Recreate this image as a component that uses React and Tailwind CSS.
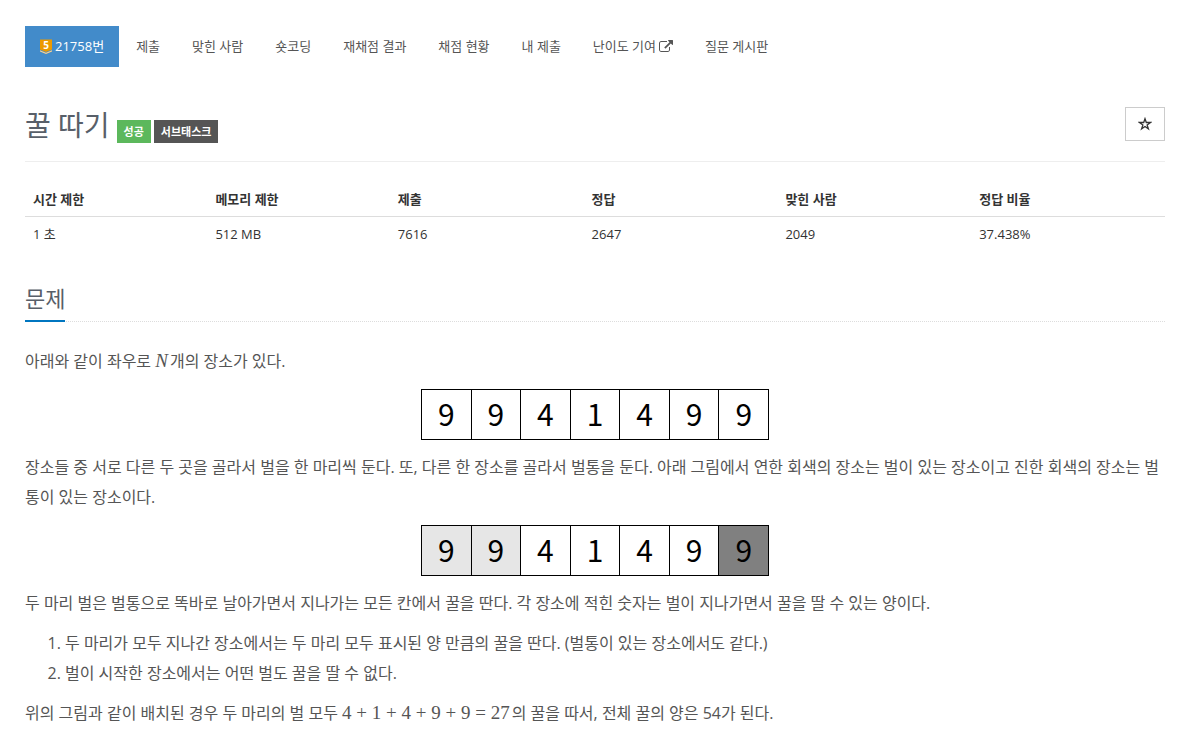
import React from 'react';

const tabs = ['제출', '맞힌 사람', '숏코딩', '재채점 결과', '채점 현황', '내 제출', '난이도 기여', '질문 게시판'];

const limits = [
  ['시간 제한', '1 초', 'w-[16%]'],
  ['메모리 제한', '512 MB', 'w-[16%]'],
  ['제출', '7616', 'w-[17%]'],
  ['정답', '2647', 'w-[17%]'],
  ['맞힌 사람', '2049', 'w-[17%]'],
  ['정답 비율', '37.438%', 'w-[17%]'],
];

const values = [9, 9, 4, 1, 4, 9, 9];

function TierBadge() {
  return (
    <svg className="h-4 w-3" viewBox="0 0 12 16" aria-hidden="true">
      <path d="M0 1.500h12v10L6 14 0 11.500z" fill="#ec9a00" />
      <path d="M0 12.200 6 14.700l6-2.500v1.300L6 16l-6-2.500z" fill="#ffd28d" />
      <text x="6" y="11" textAnchor="middle" className='font-["Open_Sans",sans-serif] text-[10px] font-bold' fill="#fff">5</text>
    </svg>
  );
}

function ExternalIcon() {
  return (
    <svg className="h-3 w-[14px]" viewBox="0 0 1792 1536" fill="currentColor" aria-hidden="true">
      <path d="M1408 800v320q0 119-84.500 203.500T1120 1408H288q-119 0-203.500-84.500T0 1120V288Q0 169 84.500 84.500T288 0h704q14 0 23 9t9 23v64q0 14-9 23t-23 9H288q-66 0-113 47t-47 113v832q0 66 47 113t113 47h832q66 0 113-47t47-113V800q0-14 9-23t23-9h64q14 0 23 9t9 23z" transform="translate(0 128)" />
      <path d="M1792 64v512q0 26-19 45t-45 19-45-19l-176-176-652 652q-10 10-23 10t-23-10L695 983q-10-10-10-23t10-23l652-652-176-176q-19-19-19-45t19-45 45-19h512q26 0 45 19t19 45z" />
    </svg>
  );
}

function StarIcon() {
  return (
    <svg className="h-[14px] w-[14px]" viewBox="0 0 14 14" fill="none" stroke="currentColor" strokeWidth="1.300" aria-hidden="true">
      <path d="M7 1.700 8.300 5.500h4.200L9.100 7.900l1.300 4L7 9.500l-3.400 2.400 1.300-4L1.500 5.500h4.200z" />
    </svg>
  );
}

function Row({ light = [], dark = [] }) {
  return (
    <div className="mx-auto mb-3 flex w-[348px] border-y border-l border-black text-black">
      {values.map((value, i) => (
        <div
          key={i}
          className={
            'flex h-[49px] flex-1 items-center justify-center border-r border-black pb-[3px] font-["Noto_Sans_CJK_KR",sans-serif] text-[30px] ' +
            (light.includes(i) ? 'bg-[#e6e6e6]' : dark.includes(i) ? 'bg-[#808080]' : 'bg-white')
          }
        >
          {value}
        </div>
      ))}
    </div>
  );
}

export default function App() {
  return (
    <div className='bg-white pt-[26px] pr-9 pl-[25px] font-["Open_Sans","Noto_Sans_CJK_KR",sans-serif] text-[13px] leading-5 text-[#333]'>
      <nav className="flex items-center gap-0.5 text-[#555]">
        <a href="#problem" className="flex h-[41px] items-center gap-[3px] bg-[#428bca] px-[15px] pb-0.5 text-white">
          <TierBadge />21758번
        </a>
        {tabs.map((tab) => (
          <a key={tab} href="#tab" className="flex h-[41px] items-center gap-[3px] px-[15px] pb-0.5">
            {tab}
            {tab === '난이도 기여' && <ExternalIcon />}
          </a>
        ))}
      </nav>

      <header className="mt-9 flex items-start justify-between border-b border-[#eee] pb-[18px]">
        <div className="flex items-center gap-[3px] pt-1">
          <h1 className="mr-1 text-[28px] leading-9 text-[#585f69]">꿀 따기</h1>
          <span className="mt-3 bg-[#5cb85c] px-[7px] text-[11px] leading-[23px] font-bold text-white">성공</span>
          <span className="mt-3 bg-[#555] px-[7px] text-[11px] leading-[23px] font-bold text-white">서브태스크</span>
        </div>
        <button aria-label="즐겨찾기" className="mt-1 flex h-[34px] w-10 items-center justify-center border border-[#ccc]">
          <StarIcon />
        </button>
      </header>

      <table className="mt-5 w-full table-fixed text-left">
        <thead>
          <tr className="border-b border-[#ddd]">
            {limits.map(([label, , width]) => (
              <th key={label} className={'p-2 leading-[18px] font-bold ' + width}>{label}</th>
            ))}
          </tr>
        </thead>
        <tbody>
          <tr>
            {limits.map(([label, value]) => (
              <td key={label} className="p-2 leading-[18px]">{value}</td>
            ))}
          </tr>
        </tbody>
      </table>

      <section className="mt-[33px]">
        <div className="flex border-b border-dotted border-[#ddd]">
          <h2 className="-mb-px border-b-2 border-[#0076c0] pb-2 text-[22px] leading-7 text-[#585f69]">문제</h2>
        </div>
        <div className="pt-6 text-[16px] leading-[30px] text-[#555]">
          <p className="mb-[13px]">
            아래와 같이 좌우로 <i className='mr-0.5 font-["Liberation_Serif",serif] text-[19px] leading-none'>N</i>개의 장소가 있다.
          </p>
          <Row />
          <p className="mb-[13px]">
            장소들 중 서로 다른 두 곳을 골라서 벌을 한 마리씩 둔다. 또, 다른 한 장소를 골라서 벌통을 둔다. 아래 그림에서 연한 회색의 장소는 벌이 있는 장소이고 진한 회색의 장소는 벌통이 있는 장소이다.
          </p>
          <Row light={[0, 1]} dark={[6]} />
          <p className="mb-[10px]">
            두 마리 벌은 벌통으로 똑바로 날아가면서 지나가는 모든 칸에서 꿀을 딴다. 각 장소에 적힌 숫자는 벌이 지나가면서 꿀을 딸 수 있는 양이다.
          </p>
          <ol className="mb-[10px] list-decimal pl-10">
            <li>두 마리가 모두 지나간 장소에서는 두 마리 모두 표시된 양 만큼의 꿀을 딴다. (벌통이 있는 장소에서도 같다.)</li>
            <li>벌이 시작한 장소에서는 어떤 벌도 꿀을 딸 수 없다.</li>
          </ol>
          <p>
            위의 그림과 같이 배치된 경우 두 마리의 벌 모두 <span className='mr-0.5 font-["Liberation_Serif",serif] text-[19px] leading-none'>4 + 1 + 4 + 9 + 9 = 27</span>의 꿀을 따서, 전체 꿀의 양은 54가 된다.
          </p>
        </div>
      </section>
    </div>
  );
}
